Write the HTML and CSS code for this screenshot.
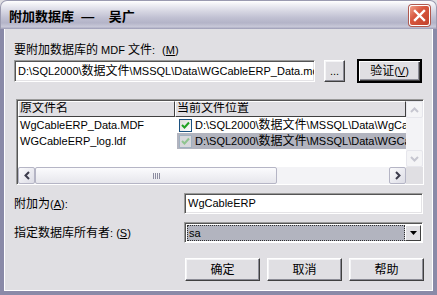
FILE: index.html
```html
<!DOCTYPE html>
<html lang="zh-CN">
<head>
  <meta charset="UTF-8" />
  <title>附加数据库</title>
  <link rel="stylesheet" href="styles.css">
</head>
<body>
  <div class="window">
    <div class="titlebar">
      <span class="title">附加数据库  —    吴广</span>
      <span class="close">
        <svg width="21" height="21" viewBox="0 0 21 21">
          <path d="M6 6 L15 15 M15 6 L6 15" stroke="#fff" stroke-width="2.4" stroke-linecap="square"/>
        </svg>
      </span>
    </div>
    <div class="frame">
      <div class="client">
        <div class="label"><span class="zh">要附加数据库的</span> MDF <span class="zh">文件</span>: <span class="key">(<u>M</u>)</span></div>
        <div class="file-row">
          <div class="textbox path">D:\SQL2000\<span class="zh">数据文件</span>\MSSQL\Data\WGCableERP_Data.mdf</div>
          <button class="btn browse">...</button>
          <button class="btn default"><span class="zh">验证</span>(<u>V</u>)</button>
        </div>

        <!-- file list -->
        <div class="listview">
          <div class="lv-main">
            <div class="lv-body">
              <div class="lv-header">
                <div class="col c1 zh">原文件名</div>
                <div class="col c2 zh">当前文件位置</div>
              </div>
              <div class="lv-row">
                <div class="cell c1">WgCableERP_Data.MDF</div>
                <div class="cell c2">
                  <span class="check"><svg width="9" height="9" viewBox="0 0 9 9"><path d="M1 4 L3.5 6.5 L8 1.5" stroke="#21a121" stroke-width="2" fill="none"/></svg></span>
                  <span class="text">D:\SQL2000\<span class="zh">数据文件</span>\MSSQL\Data\WgCableERP_Data.MDF</span>
                </div>
              </div>
              <div class="lv-row">
                <div class="cell c1">WGCableERP_log.ldf</div>
                <div class="cell c2 selected">
                  <span class="check dim"><svg width="9" height="9" viewBox="0 0 9 9"><path d="M1 4 L3.5 6.5 L8 1.5" stroke="#8fc48f" stroke-width="2" fill="none"/></svg></span>
                  <span class="text">D:\SQL2000\<span class="zh">数据文件</span>\MSSQL\Data\WGCableERP_log.ldf</span>
                </div>
              </div>
            </div>
            <div class="vscroll">
              <div class="sb-btn off"><svg width="9" height="6" viewBox="0 0 9 6"><path d="M1 5 L4.5 1.5 L8 5" stroke="#c6c6d0" stroke-width="2" fill="none"/></svg></div>
              <div class="vtrack"></div>
              <div class="sb-btn off"><svg width="9" height="6" viewBox="0 0 9 6"><path d="M1 1 L4.5 4.5 L8 1" stroke="#c6c6d0" stroke-width="2" fill="none"/></svg></div>
            </div>
          </div>
          <div class="hscroll">
            <div class="sb-btn"><svg width="6" height="9" viewBox="0 0 6 9"><path d="M5 1 L1.5 4.5 L5 8" stroke="#3b3b4b" stroke-width="2" fill="none"/></svg></div>
            <div class="htrack">
              <div class="thumb"><span class="grip"></span></div>
            </div>
            <div class="sb-btn"><svg width="6" height="9" viewBox="0 0 6 9"><path d="M1 1 L4.5 4.5 L1 8" stroke="#3b3b4b" stroke-width="2" fill="none"/></svg></div>
            <div class="corner"></div>
          </div>
        </div>

        <div class="field-row">
          <div class="label field-label"><span class="zh">附加为</span>(<u>A</u>):</div>
          <div class="textbox field">WgCableERP</div>
        </div>
        <div class="field-row">
          <div class="label field-label"><span class="zh">指定数据库所有者</span>: (<u>S</u>)</div>
          <div class="combo">
            <div class="combo-value"><span class="focus">sa</span></div>
            <div class="combo-btn"><svg width="7" height="4" viewBox="0 0 7 4"><path d="M0 0 H7 L3.5 4 Z" fill="#000"/></svg></div>
          </div>
        </div>

        <div class="actions">
          <button class="btn action zh">确定</button>
          <button class="btn action zh">取消</button>
          <button class="btn action zh">帮助</button>
        </div>
      </div>
    </div>
  </div>
</body>
</html>
```

FILE: styles.css
```css
body {
  margin: 0;
  background: #fff;
  font-family: "Liberation Sans", "Noto Sans CJK SC", sans-serif;
  font-size: 11px;
  color: #000;
}
.zh { font-size: 12px; }
.window {
  width: 437px;
  height: 295px;
  display: flex;
  flex-direction: column;
  background: #e0dfe3;
}
/* Silver title bar */
.titlebar {
  height: 29px;
  flex: none;
  display: flex;
  align-items: center;
  justify-content: space-between;
  padding: 0 6px 0 8px;
  box-sizing: border-box;
  border-radius: 7px 7px 0 0;
  background: linear-gradient(#ffffff 0%, #f0f0f5 12%, #d8d8e4 35%, #c0c0d2 60%, #b4b4c8 78%, #c8c8d8 92%, #9a9ab4 100%);
  border: 1px solid #9a9ab0;
  border-bottom: none;
}
.title {
  white-space: pre;
  font-weight: 700;
  font-size: 13px;
  padding-top: 1px;
}
.close {
  width: 21px;
  height: 21px;
  border-radius: 3px;
  border: 1px solid #fff;
  box-sizing: border-box;
  background: linear-gradient(135deg, #f0a08a 0%, #d8573f 40%, #c2412c 100%);
  box-shadow: 0 0 0 1px #b05a50;
  display: flex;
  align-items: center;
  justify-content: center;
  margin-top: 1px;
}
.close svg { margin: -1px; }
.frame {
  flex: 1;
  display: flex;
  border: 4px solid #8a8aa8;
  border-top: none;
  box-shadow: inset 1px 0 #fff, inset -1px 0 #fff, inset 0 -1px #fff;
}
.client {
  flex: 1;
  display: flex;
  flex-direction: column;
  padding: 14px 11px 0 9px;
  margin: 0 1px 1px 1px;
}
.label {
  line-height: 14px;
  white-space: nowrap;
}
.key { margin-left: 4px; }
.file-row {
  display: flex;
  align-items: center;
  margin-top: 2px;
  height: 24px;
}
.textbox {
  box-sizing: border-box;
  background: #fff;
  border: 1px solid;
  border-color: #9a9a9a #fff #fff #9a9a9a;
  box-shadow: inset 1px 1px #555, inset -1px -1px #e4e3e6;
  white-space: nowrap;
  overflow: hidden;
  padding: 0 3px;
}
.path {
  width: 301px;
  height: 22px;
  line-height: 20px;
}
.btn {
  font: inherit;
  color: #000;
  background: #e0dfe3;
  box-sizing: border-box;
  border: 1px solid;
  border-color: #fff #404040 #404040 #fff;
  box-shadow: inset -1px -1px #8c8c96, inset 1px 1px #f4f4f6;
  padding: 0;
  line-height: 18px;
}
.btn.zh { font-size: 12px; }
.browse {
  width: 21px;
  height: 22px;
  margin-left: 9px;
  line-height: 14px;
}
.default {
  width: 65px;
  height: 24px;
  margin-left: 12px;
  border-width: 2px;
  border-color: #000;
  box-shadow: inset 1px 1px #fff, inset -1px -1px #404040, inset -2px -2px #8c8c96;
}
/* list view */
.listview {
  margin: 16px 0 0 2px;
  width: 408px;
  height: 86px;
  box-sizing: border-box;
  border: 1px solid;
  border-color: #9a9a9a #fff #fff #9a9a9a;
  box-shadow: inset 1px 1px #555;
  padding: 1px 0 0 1px;
  background: #fff;
  display: flex;
  flex-direction: column;
}
.lv-main {
  flex: 1;
  display: flex;
  min-height: 0;
}
.lv-body {
  flex: 1;
  overflow: hidden;
}
.lv-header {
  display: flex;
  height: 16px;
}
.col {
  box-sizing: border-box;
  background: #e0dfe3;
  border: 1px solid;
  border-color: #fff #404040 #404040 #fff;
  line-height: 13px;
  padding-left: 1px;
  white-space: nowrap;
  overflow: hidden;
}
.c1 { width: 157px; flex: none; }
.c2 { flex: 1; min-width: 0; }
.lv-row {
  display: flex;
  height: 16px;
  line-height: 16px;
}
.cell {
  white-space: nowrap;
  overflow: hidden;
  padding-left: 2px;
}
.cell.c2 {
  display: flex;
  align-items: center;
  padding-left: 2px;
}
.cell .text {
  overflow: hidden;
  white-space: nowrap;
}
.cell.selected { background: #b2b4bf; }
.check {
  flex: none;
  width: 13px;
  height: 13px;
  box-sizing: border-box;
  border: 1px solid #1c5180;
  background: linear-gradient(135deg, #dcdcd7, #fff);
  display: flex;
  align-items: center;
  justify-content: center;
  margin-right: 3px;
}
.check.dim {
  border-color: #a0b0c0;
  background: #d8d8dc;
}
.vscroll {
  width: 17px;
  flex: none;
  display: flex;
  flex-direction: column;
  background: #f3f3f6;
}
.vtrack { flex: 1; }
.sb-btn {
  flex: none;
  width: 17px;
  height: 17px;
  box-sizing: border-box;
  border: 1px solid #b5b5c5;
  border-radius: 2px;
  background: linear-gradient(135deg, #fafafc, #dddde6);
  display: flex;
  align-items: center;
  justify-content: center;
}
.sb-btn.off {
  border-color: #e6e6ec;
  background: #f4f4f6;
}
.hscroll {
  height: 17px;
  flex: none;
  display: flex;
  background: #f3f3f6;
}
.htrack {
  flex: 1;
  display: flex;
}
.thumb {
  width: 242px;
  box-sizing: border-box;
  border: 1px solid #b5b5c5;
  border-radius: 2px;
  background: linear-gradient(#fbfbfd, #e6e6ec);
  display: flex;
  align-items: center;
  justify-content: center;
}
.grip {
  width: 7px;
  height: 6px;
  background: repeating-linear-gradient(90deg, #8c8ca0 0 1px, transparent 1px 2px);
}
.corner {
  width: 17px;
  background: #e0dfe3;
}
/* fields */
.field-row {
  display: flex;
  align-items: center;
  margin-top: 8px;
  height: 21px;
}
.field-label { width: 170px; flex: none; }
.field {
  width: 239px;
  height: 21px;
  line-height: 19px;
  padding-left: 3px;
}
.combo {
  width: 239px;
  height: 21px;
  box-sizing: border-box;
  border: 1px solid;
  border-color: #9a9a9a #fff #fff #9a9a9a;
  box-shadow: inset 1px 1px #555;
  padding: 2px 1px 1px 2px;
  display: flex;
  background: #fff;
}
.combo-value {
  flex: 1;
  background: #b2b4bf;
  display: flex;
}
.focus {
  flex: 1;
  border: 1px dotted #303030;
  line-height: 14px;
  padding-left: 1px;
}
.combo-btn {
  width: 16px;
  box-sizing: border-box;
  border: 1px solid;
  border-color: #fff #404040 #404040 #fff;
  background: #e0dfe3;
  display: flex;
  align-items: center;
  justify-content: center;
}
.actions {
  display: flex;
  justify-content: flex-end;
  gap: 7px;
  margin-top: 15px;
}
.action {
  width: 75px;
  height: 23px;
}
```
